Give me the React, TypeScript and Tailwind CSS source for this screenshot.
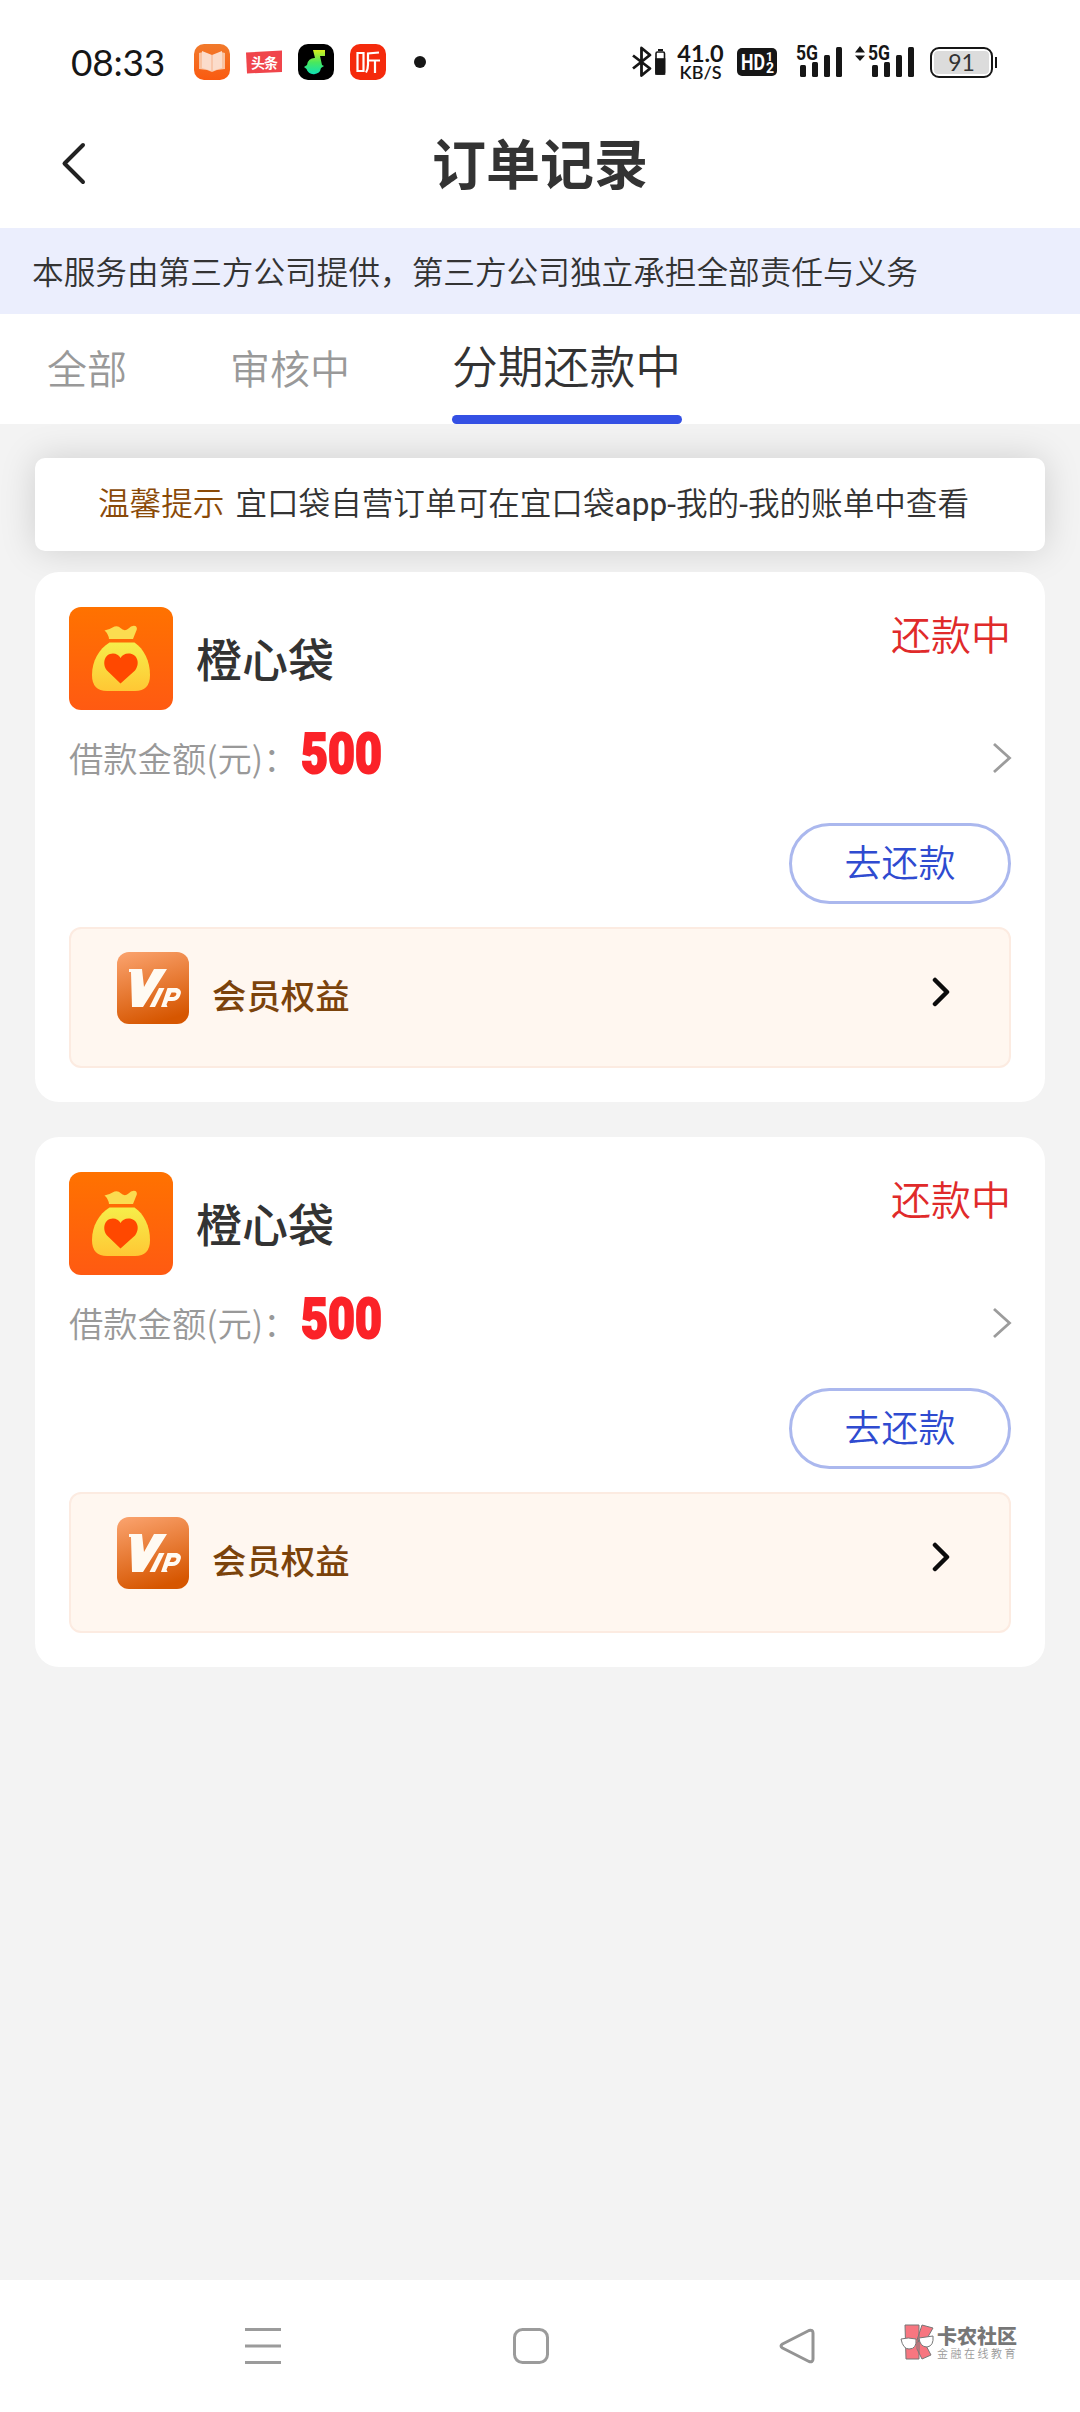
const orders = [
  { id: 1, name: "橙心袋", status: "还款中", amount: "500" },
  { id: 2, name: "橙心袋", status: "还款中", amount: "500" },
]

const Signal = () => (
  <svg className="overflow-visible" width="48" height="34" viewBox="0 0 48 34" fill="#161616">
    <rect x="4" y="20" width="6" height="12" rx="1.5" />
    <rect x="16" y="17" width="6" height="15" rx="1.5" />
    <rect x="28" y="10" width="6" height="22" rx="1.5" />
    <rect x="40" y="2" width="6" height="30" rx="1.5" />
    <text x="0" y="14.5" fontSize="20" fontWeight="700" textLength="22" lengthAdjust="spacingAndGlyphs" fontFamily="Roboto, sans-serif">5G</text>
  </svg>
)

const StatusBar = () => (
  <div className="flex h-[124px] w-full items-center pl-[71px] text-[#161616]">
    <span className="w-[123px] whitespace-nowrap font-[Lato] text-[37px] font-normal leading-[40px] tracking-[-0.2px]">08:33</span>
    <svg width="36" height="36" viewBox="0 0 36 36">
      <defs>
        <linearGradient id="book" x1="0" y1="0" x2="0" y2="1">
          <stop offset="0" stopColor="#f17a2c" />
          <stop offset="1" stopColor="#fa5a10" />
        </linearGradient>
      </defs>
      <rect width="36" height="36" rx="10" fill="url(#book)" />
      <path d="M5 9l4-1 9 4 9-4 4 1v16l-8 1-5 2-5-2-8-1z" fill="#f9c3a2" />
      <path d="M8 7l10 4v16l-10-3zM28 7l-10 4v16l10-3z" fill="#fbdccb" />
      <path d="M18 11v16" stroke="#f5b08a" strokeWidth="1" />
    </svg>
    <svg className="ml-4" width="36" height="36" viewBox="0 0 36 36">
      <path d="M0 8.500L36 6.500V28L1 29.500z" fill="#f0454b" />
      <text x="5" y="23.500" fontSize="14" fontWeight="700" fill="#fff" textLength="27" fontFamily="'Noto Sans CJK SC', sans-serif">头条</text>
    </svg>
    <svg className="ml-4" width="36" height="36" viewBox="0 0 36 36">
      <defs>
        <linearGradient id="note" x1="0" y1="0" x2="0" y2="1">
          <stop offset="0" stopColor="#d8f01c" />
          <stop offset=".5" stopColor="#4ae85c" />
          <stop offset="1" stopColor="#0fe0b4" />
        </linearGradient>
      </defs>
      <rect width="36" height="36" rx="10" fill="#000" />
      <path d="M15 6h12v6h-5l2 9 2 1-3 2a7.500 7.500 0 0 1-14.500 1L6 23l3-2a7.500 7.500 0 0 1 8-7z" fill="url(#note)" />
    </svg>
    <svg className="ml-4" width="36" height="36" viewBox="0 0 36 36">
      <rect width="36" height="36" rx="10" fill="#f52a0c" />
      <g fill="none" stroke="#fff" strokeWidth="2.200">
        <path d="M7.500 9h6v18h-6zM29 8.500l-11 1v11q0 5-2 8M18 16.500h12M25 16.500v12.500" />
      </g>
    </svg>
    <span className="ml-7 size-3 rounded-full bg-[#161616]" />

    <div className="ml-[206px] flex items-center">
      <svg width="34" height="34" viewBox="0 0 34 34" fill="none" stroke="#161616" strokeWidth="2.800">
        <path d="M1 10.500l17 13-8.500 7V3l8.500 7-17 13.500" strokeLinejoin="round" />
        <rect x="24" y="7" width="8.500" height="22" rx="1.500" strokeWidth="1.600" />
        <rect x="24" y="14" width="8.500" height="15" fill="#161616" strokeWidth="1.600" />
        <path d="M26 5h5" strokeWidth="2" />
      </svg>
      <div className="ml-3 flex w-[45px] flex-col items-center whitespace-nowrap font-[Lato]">
        <span className="text-[23.500px] font-bold leading-[20px]">41.0</span>
        <span className="text-[18px] font-semibold leading-[18px]">KB/S</span>
      </div>
      <svg className="ml-[14px]" width="40" height="30" viewBox="0 0 40 30" fontFamily="Roboto, sans-serif" fontWeight="700" fill="#fff">
        <rect y="1" width="40" height="28" rx="5" fill="#161616" />
        <text x="4" y="23" fontSize="22" textLength="24" lengthAdjust="spacingAndGlyphs">HD</text>
        <text x="29" y="14" fontSize="12">1</text>
        <text x="29" y="26" fontSize="14">2</text>
      </svg>
      <div className="ml-[19px]">
        <Signal />
      </div>
      <svg className="ml-[11px]" width="10" height="34" viewBox="0 0 10 34" fill="#161616">
        <path d="M0 7.500L5 1l5 6.500zM0 10.500h10L5 16z" />
      </svg>
      <div className="ml-[3px]">
        <Signal />
      </div>
      <div className="ml-[14px] flex h-[31px] w-[63px] items-center justify-center rounded-[9px] border-[2.500px] border-[#161616] p-[2px]">
        <div className="flex h-full w-full items-center justify-center rounded-[4px] bg-[#dcdcdc] font-[Lato] text-[23px] font-normal leading-none text-[#333]">91</div>
      </div>
      <span className="ml-[2px] h-[11px] w-[2px] bg-[#161616]" />
    </div>
  </div>
)

const BagIcon = () => (
  <svg width="104" height="104" viewBox="0 0 104 104">
    <defs>
      <linearGradient id="bagBg" x1="0" y1="0" x2="0" y2="1">
        <stop offset="0" stopColor="#ff7200" />
        <stop offset="1" stopColor="#ff5a12" />
      </linearGradient>
      <linearGradient id="bag" x1="0" y1="0" x2="0" y2="1">
        <stop offset="0" stopColor="#f6ee4a" />
        <stop offset="1" stopColor="#ffc734" />
      </linearGradient>
    </defs>
    <rect width="104" height="103" rx="12" fill="url(#bagBg)" />
    <path d="M35.500 23.500q5-1 10-4 4-1 6 1.500 4 4 8 .5 3-3.500 7-2.500 2.500 2 .5 5.500l-3 7.500H40q-.5-5-4.500-8.500z" fill="#fbdc50" />
    <path d="M40.500 35.500h25C75 42 81 54 81 68q0 16-15 16H38q-15 0-15-16c0-14 7-26 17.500-32.500z" fill="url(#bag)" />
    <path d="M51.500 76.500L38 63.500c-5-6-3-17 6-17q5 0 7.500 4.500Q54 46.500 59.500 46.500c9 0 12 10 6.500 17z" fill="#ff4800" />
  </svg>
)

const VipIcon = () => (
  <svg width="72" height="72" viewBox="0 0 72 72">
    <defs>
      <linearGradient id="vip" x1="0.2" y1="0" x2="0.500" y2="1">
        <stop offset="0" stopColor="#f9a06a" />
        <stop offset="1" stopColor="#d65600" />
      </linearGradient>
    </defs>
    <rect width="72" height="72" rx="12" fill="url(#vip)" />
    {/* stylised V, I and P strokes of the badge */}
    <g fill="#fffaf2">
      <path d="M12 17h13l2 18 10-18h13L26 55H15L14 20h-2z" />
      <path d="M42 36h5.500L38 55h-5.500z" />
      <path fillRule="evenodd" d="M50.500 36H60q6 2 3 8-2 5-8 5h-4l-1.500 3.500 1 2.500h-6.500zM54.500 40.500L52.500 45h4q2.500-.5 3-3 0-1.500-1.500-1.500z" />
    </g>
  </svg>
)

const OrderCard = ({ order }: { order: (typeof orders)[number] }) => (
  <section className="h-[530px] rounded-[24px] bg-white px-[34px] pt-[35px]">
    <div className="flex h-[104px] justify-between">
      <div className="flex items-center">
        <BagIcon />
        <h2 className="mb-1 ml-[23px] text-[46px] font-medium leading-[60px]">{order.name}</h2>
      </div>
      <span className="pt-[2px] text-[40px] leading-[48px] text-[#e02a2a]">{order.status}</span>
    </div>
    <div className="flex h-[94px] items-center justify-between">
      <div className="flex items-center">
        <span className="mt-[-3px] w-[232px] whitespace-nowrap text-[34.300px] leading-[48px] text-[#999]">借款金额(元)：</span>
        <span className="mt-[-8px] origin-left scale-x-[0.83] font-[Roboto] text-[56px] font-black leading-[60px] text-[#fb2228] [-webkit-text-stroke:2px_#fb2228]">{order.amount}</span>
      </div>
      <svg className="mr-[-1px]" width="20" height="32" viewBox="0 0 20 32" fill="none" stroke="#9c9c9c" strokeWidth="2.800">
        <path d="M2 2l15.500 14L2 30" />
      </svg>
    </div>
    <div className="mt-[18px] flex justify-end">
      <button className="flex h-[81px] w-[222px] items-center justify-center rounded-full border-[3px] border-[#abb8ee] pb-[5px] text-[37px] leading-[48px] text-[#2f4bd0]">去还款</button>
    </div>
    <div className="mt-[23px] flex h-[141px] items-start rounded-[12px] border-2 border-[#fcebe1] bg-[#fff7f0] pl-[46px] pr-[58px] pt-[23px]">
      <VipIcon />
      <span className="ml-[23px] mt-[18px] text-[34.400px] font-medium leading-[48px] text-[#7b430b]">会员权益</span>
      <svg className="ml-auto mt-[25px]" width="20" height="30" viewBox="0 0 20 30" fill="none" stroke="#0c0c0c" strokeWidth="4.500" strokeLinecap="round" strokeLinejoin="round">
        <path d="M4 3l12 12L4 27" />
      </svg>
    </div>
  </section>
)

const NavBar = () => (
  <footer className="flex h-[132px] items-center bg-white pl-[245px]">
    <svg width="36" height="36" viewBox="0 0 36 36" stroke="#9b9b9b" strokeWidth="3">
      <path d="M0 1.500h36M0 18h36M0 34.500h36" />
    </svg>
    <svg className="ml-[232px]" width="36" height="36" viewBox="0 0 36 36" fill="none" stroke="#9b9b9b" strokeWidth="3">
      <rect x="1.500" y="1.500" width="33" height="33" rx="8" />
    </svg>
    <svg className="ml-[230px]" width="36" height="36" viewBox="0 0 36 36" fill="none" stroke="#949494" strokeWidth="3" strokeLinejoin="round">
      <path d="M30 2.500L3.500 16q-3 2 0 4L30 33.500q4 1 4-2.500V5q0-3.500-4-2.500z" />
    </svg>
    <div className="ml-[85px] mt-[-8px] flex items-center">
      <svg width="34" height="36" viewBox="0 0 34 36" stroke="#777" strokeWidth="1">
        <path d="M5 1h14v34H6zM22 1l11 3-8 14-8-2zM17 18l6-2 8 15-9 4-5-10z" fill="#f77680" />
        <path d="M1 15q7-2 15 0 1 10-7 10-6 0-8-10zM19 14l14-2q1 10-6 11-7 0-8-9z" fill="#fff" />
      </svg>
      <div className="ml-[3px] flex flex-col whitespace-nowrap">
        <span className="text-[20px] font-black leading-[21px] text-[#777]">卡农社区</span>
        <span className="text-[11px] leading-[14px] tracking-[2.500px] text-[#999]">金融在线教育</span>
      </div>
    </div>
  </footer>
)

export default function App() {
  return (
    <div className="flex h-[2412px] w-[1080px] flex-col overflow-hidden bg-[#f3f3f3] font-['Noto_Sans_CJK_SC',sans-serif] font-[350] text-[#333]">
      <header className="bg-white">
        <StatusBar />
        <div className="grid h-[104px] grid-cols-3 items-start">
          <svg className="ml-[60px] mt-[18px]" width="28" height="44" viewBox="0 0 28 44" fill="none" stroke="#222" strokeWidth="4" strokeLinecap="round" strokeLinejoin="round">
            <path d="M23 3L4.500 21.500 23 40" />
          </svg>
          <h1 className="mt-[2px] text-center text-[54px] font-bold leading-[72px]">订单记录</h1>
        </div>
        <div className="flex h-[86px] items-center bg-[#ebeefd] pb-[2px] pl-8 text-[31.650px] leading-[48px]">本服务由第三方公司提供，第三方公司独立承担全部责任与义务</div>
        <nav className="flex h-[110px] text-[40px] leading-[56px] text-[#999]">
          <span className="ml-[47px] mt-[25px]">全部</span>
          <span className="ml-[103px] mt-[25px]">审核中</span>
          <div className="ml-[102px] flex w-[230px] flex-col justify-between text-[45.800px] text-[#333]">
            <span className="mt-[22px] whitespace-nowrap">分期还款中</span>
            <span className="h-[9px] rounded-full bg-[#3450e4]" />
          </div>
        </nav>
      </header>
      <main className="flex-1 px-[35px] pt-[34px]">
        <div className="flex h-[93px] items-center gap-[11px] whitespace-nowrap rounded-[10px] bg-white pl-[63px] font-[Roboto,'Noto_Sans_CJK_SC',sans-serif] text-[31.600px] leading-[48px] shadow-[0_0_36px_rgba(0,0,0,0.15)]">
          <span className="text-[#8a4a08]">温馨提示</span>
          <span>
            宜口袋自营订单可在宜口袋<span className="font-normal">app-</span>我的<span className="font-normal">-</span>我的账单中查看
          </span>
        </div>
        <div className="mt-[21px] flex flex-col gap-[35px]">
          {orders.map((order) => (
            <OrderCard key={order.id} order={order} />
          ))}
        </div>
      </main>
      <NavBar />
    </div>
  )
}
